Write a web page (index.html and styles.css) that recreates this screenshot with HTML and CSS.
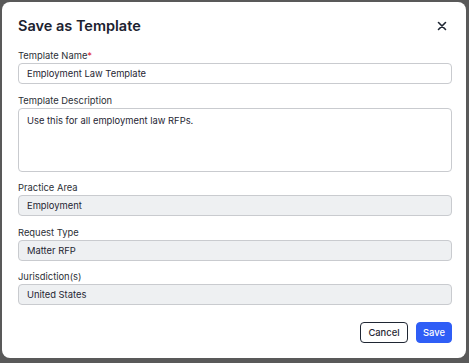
FILE: index.html
```html
<!DOCTYPE html>
<html lang="en">
<head>
<meta charset="UTF-8">
<meta name="viewport" content="width=device-width, initial-scale=1.0">
<title>Save as Template</title>
<link rel="stylesheet" href="styles.css">
</head>
<body>

<div class="modal">

  <div class="modal-header">
    <h1>Save as Template</h1>
    <button type="button" class="close-btn" aria-label="Close">
      <svg width="10" height="10" viewBox="0 0 10 10">
        <path d="M1.5 1.5L8.5 8.5M8.5 1.5L1.5 8.5" stroke="#1f2633" stroke-width="1.6" stroke-linecap="round"/>
      </svg>
    </button>
  </div>

  <form class="template-form">
    <div class="field">
      <label for="name">Template Name<span class="req">*</span></label>
      <input type="text" id="name" value="Employment Law Template">
    </div>

    <div class="field">
      <label for="desc">Template Description</label>
      <textarea id="desc">Use this for all employment law RFPs.</textarea>
    </div>

    <div class="field">
      <label for="area">Practice Area</label>
      <input type="text" id="area" class="readonly" value="Employment" readonly>
    </div>

    <div class="field">
      <label for="type">Request Type</label>
      <input type="text" id="type" class="readonly" value="Matter RFP" readonly>
    </div>

    <div class="field">
      <label for="juris">Jurisdiction(s)</label>
      <input type="text" id="juris" class="readonly" value="United States" readonly>
    </div>

    <div class="actions">
      <button type="button" class="btn btn-cancel">Cancel</button>
      <button type="button" class="btn btn-save">Save</button>
    </div>
  </form>

</div>

</body>
</html>
```

FILE: styles.css
```css
body {
  font-family: Inter, "Noto Sans", sans-serif;
  background-color: #595959;
  margin: 0;
  padding: 2px;
  color: #1f2633;
}

.modal {
  width: 464px;
  height: 356px;
  box-sizing: border-box;
  background-color: #fff;
  border-radius: 8px;
  padding: 14px 14px 16px 16px;
}

.modal-header {
  display: flex;
  align-items: center;
  justify-content: space-between;
  height: 20px;
  margin-bottom: 12px;
}

.modal-header h1 {
  margin: 0;
  font-size: 14.5px;
  font-weight: 600;
  line-height: 20px;
  color: #1c2230;
}

.close-btn {
  width: 16px;
  height: 16px;
  padding: 0;
  margin-right: 2px;
  border: none;
  background: none;
  display: flex;
  align-items: center;
  justify-content: center;
  cursor: pointer;
}

.field {
  display: flex;
  flex-direction: column;
  margin-bottom: 8.5px;
}

label {
  font-size: 9.4px;
  line-height: 15px;
  color: #2b2f36;
}

.req {
  color: #e0293b;
}

input[type="text"],
textarea {
  font-family: inherit;
  font-size: 9.4px;
  color: #1f2633;
  height: 21px;
  padding: 0 8px;
  border: 1px solid #c9cbcf;
  border-radius: 4px;
  box-sizing: border-box;
  background-color: #fff;
  outline: none;
}

textarea {
  height: 64px;
  padding: 6px 8px;
  resize: none;
}

input.readonly {
  background-color: #eef0f2;
}

.actions {
  display: flex;
  justify-content: flex-end;
  gap: 8px;
  margin-top: 17px;
}

.btn {
  font-family: inherit;
  font-size: 9.4px;
  font-weight: 500;
  height: 21px;
  border-radius: 4px;
  box-sizing: border-box;
  cursor: pointer;
}

.btn-cancel {
  padding: 0 7.5px;
  background-color: #fff;
  color: #1f2633;
  border: 1px solid #1f2633;
}

.btn-save {
  padding: 0 6px;
  background-color: #2f5ef6;
  color: #fff;
  border: 1px solid #2f5ef6;
}
```
